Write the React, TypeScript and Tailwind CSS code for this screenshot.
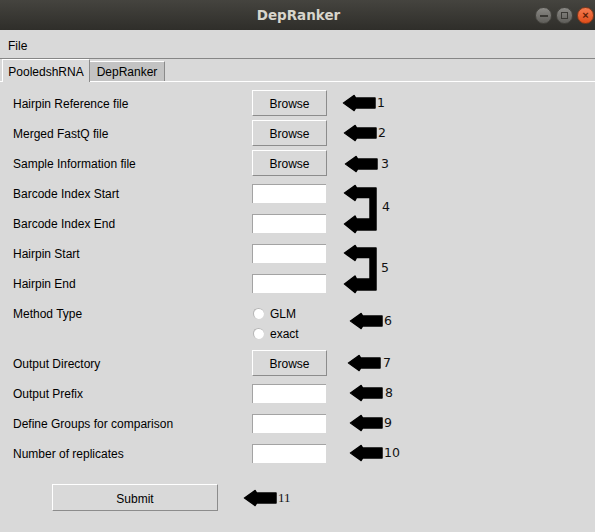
import React from "react";

const Arrow = () => (
  <svg width="34" height="18" viewBox="0 0 34 18" className="block shrink-0">
    <path
      d="M1.5 9 L12 1.5 L13.5 4 L33 4 L33 14 L13.5 14 L12 16.5 Z"
      fill="#000"
      stroke="#000"
      strokeWidth="1.5"
      strokeLinejoin="round"
    />
  </svg>
);

const Bracket = () => (
  <svg width="34" height="60" viewBox="0 0 34 60" className="block shrink-0">
    <path
      d="M1.5 15 L12 7.5 L13.5 10 L33 10 L33 52 L13.5 52 L12 54.5 L1.5 46 L12 38 L13.5 41 L27 41 L27 19.5 L13.5 19.5 L12 22.5 Z"
      fill="#000"
      stroke="#000"
      strokeWidth="1.5"
      strokeLinejoin="round"
    />
  </svg>
);

const Browse = () => (
  <div className="w-[75px] h-[26px] flex items-center justify-center pt-[2px] border border-t-white border-l-white border-b-[#8c8c8c] border-r-[#8c8c8c] bg-[#d9d9d9] text-[12px] text-black">
    Browse
  </div>
);

const Entry = () => (
  <div className="w-[74px] h-[19px] bg-white border-t border-l border-[#a3a3a3]" />
);

const Num = ({ n, cls }: { n: string; cls: string }) => (
  <span className={`text-[12.5px] text-[#111] leading-none ${cls}`} style={{ fontFamily: '"DejaVu Sans", sans-serif' }}>
    {n}
  </span>
);

function Row({
  label,
  widget,
  arrow,
}: {
  label: string;
  widget: React.ReactNode;
  arrow?: React.ReactNode;
}) {
  return (
    <div className="h-[30px] flex items-center">
      <div className="w-[239px] pt-[2px] text-[12px] text-black">{label}</div>
      <div className="w-[75px] flex items-center">{widget}</div>
      {arrow}
    </div>
  );
}

const ArrowNum = ({ ml, n, nml = "ml-[1px]", dy = "" }: { ml: string; n: string; nml?: string; dy?: string }) => (
  <div className={`flex items-center ${ml} ${dy}`}>
    <Arrow />
    <Num n={n} cls={nml} />
  </div>
);

const Radio = ({ label }: { label: string }) => (
  <div className="h-[20px] flex items-center">
    <div className="w-[11px] h-[11px] rounded-full bg-white border-t border-l border-[#b5b5b5] ml-[1px]" />
    <span className="ml-[6px] pt-[1px] text-[12px] text-black">{label}</span>
  </div>
);

export default function App() {
  return (
    <div
      className="w-[595px] h-[532px] bg-[#d9d9d9] flex flex-col overflow-hidden"
      style={{ fontFamily: '"Liberation Sans", Arial, sans-serif' }}
    >
      {/* Title bar */}
      <div className="h-[30px] bg-gradient-to-b from-[#45443f] to-[#2f2e2a] flex items-center relative shrink-0">
        <div
          className="flex-1 text-center text-[13.5px] font-bold text-[#d8d5cc] pl-[2px]"
          style={{ fontFamily: '"DejaVu Sans", "Open Sans", sans-serif' }}
        >
          DepRanker
        </div>
        <div className="absolute right-[1px] top-[7px] flex gap-[4px]">
          <div className="w-[17px] h-[17px] rounded-full bg-gradient-to-b from-[#8a8985] to-[#5f5e5a] border border-[#45443f] flex items-center justify-center">
            <div className="w-[8px] h-[2px] bg-[#3a3935]" />
          </div>
          <div className="w-[17px] h-[17px] rounded-full bg-gradient-to-b from-[#8a8985] to-[#5f5e5a] border border-[#45443f] flex items-center justify-center">
            <div className="w-[7px] h-[7px] border-[1.5px] border-[#3a3935]" />
          </div>
          <div className="w-[17px] h-[17px] rounded-full bg-gradient-to-b from-[#f47b4f] to-[#e04d17] border border-[#8a3a1a] flex items-center justify-center text-[11px] leading-none text-[#5a1e08] font-bold">
            ×
          </div>
        </div>
      </div>

      {/* Menu bar */}
      <div className="h-[29px] flex items-center pl-[8px] pt-[4px] text-[12px] text-black border-b border-[#868686] shrink-0">
        File
      </div>

      {/* Tabs */}
      <div className="h-[23px] flex items-end pl-[2px] border-b border-white shrink-0 relative">
        <div className="h-[23px] w-[88px] bg-[#d9d9d9] border-l border-t border-white border-r border-r-[#8a8a8a] flex items-center justify-center text-[12px] text-black relative top-[1px] pt-[2px]">
          PooledshRNA
        </div>
        <div className="h-[20px] w-[75px] bg-[#c3c3c3] border-t border-white border-r border-r-[#8a8a8a] flex items-center justify-center pt-[1px] text-[12px] text-black">
          DepRanker
        </div>
      </div>

      {/* Content */}
      <div className="flex flex-col pl-[13px] pt-[6px]">
        <Row label="Hairpin Reference file" widget={<Browse />} arrow={<ArrowNum ml="ml-[15px]" n="1" />} />
        <Row label="Merged FastQ file" widget={<Browse />} arrow={<ArrowNum ml="ml-[16px]" n="2" />} />
        <Row label="Sample Information file" widget={<Browse />} arrow={<ArrowNum ml="ml-[17px]" n="3" nml="ml-[3px]" dy="pt-[2px]" />} />

        <div className="flex items-center">
          <div className="flex flex-col">
            <Row label="Barcode Index Start" widget={<Entry />} />
            <Row label="Barcode Index End" widget={<Entry />} />
          </div>
          <div className="ml-[16px] flex items-center">
            <Bracket />
            <Num n="4" cls="ml-[5px] -mt-[2px]" />
          </div>
        </div>

        <div className="flex items-center">
          <div className="flex flex-col">
            <Row label="Hairpin Start" widget={<Entry />} />
            <Row label="Hairpin End" widget={<Entry />} />
          </div>
          <div className="ml-[16px] flex items-center">
            <Bracket />
            <Num n="5" cls="ml-[4px]" />
          </div>
        </div>

        {/* Method type */}
        <div className="h-[50px] flex items-start">
          <div className="w-[239px] h-[30px] flex items-center pt-[2px] text-[12px] text-black">Method Type</div>
          <div className="w-[75px] flex flex-col pt-[5px]">
            <Radio label="GLM" />
            <Radio label="exact" />
          </div>
          <div className="ml-[22px] mt-[14px] flex items-center">
            <Arrow />
            <Num n="6" cls="ml-[1px]" />
          </div>
        </div>

        <Row label="Output Directory" widget={<Browse />} arrow={<ArrowNum ml="ml-[20px]" n="7" nml="ml-[2px]" />} />
        <Row label="Output Prefix" widget={<Entry />} arrow={<ArrowNum ml="ml-[22px]" n="8" nml="ml-[2px]" />} />
        <Row label="Define Groups for comparison" widget={<Entry />} arrow={<ArrowNum ml="ml-[22px]" n="9" nml="ml-[1px]" />} />
        <Row label="Number of replicates" widget={<Entry />} arrow={<ArrowNum ml="ml-[22px]" n="10" nml="ml-[1px]" />} />

        <div className="flex items-center mt-[16px] pl-[39px]">
          <div className="w-[166px] h-[27px] flex items-center justify-center pt-[2px] border border-t-white border-l-white border-b-[#8c8c8c] border-r-[#8c8c8c] text-[12px] text-black">
            Submit
          </div>
          <div className="ml-[25px] flex items-center">
            <Arrow />
            <span className="text-[13px] text-[#111] ml-[1px]" style={{ fontFamily: '"Liberation Serif", serif' }}>
              11
            </span>
          </div>
        </div>
      </div>
    </div>
  );
}
